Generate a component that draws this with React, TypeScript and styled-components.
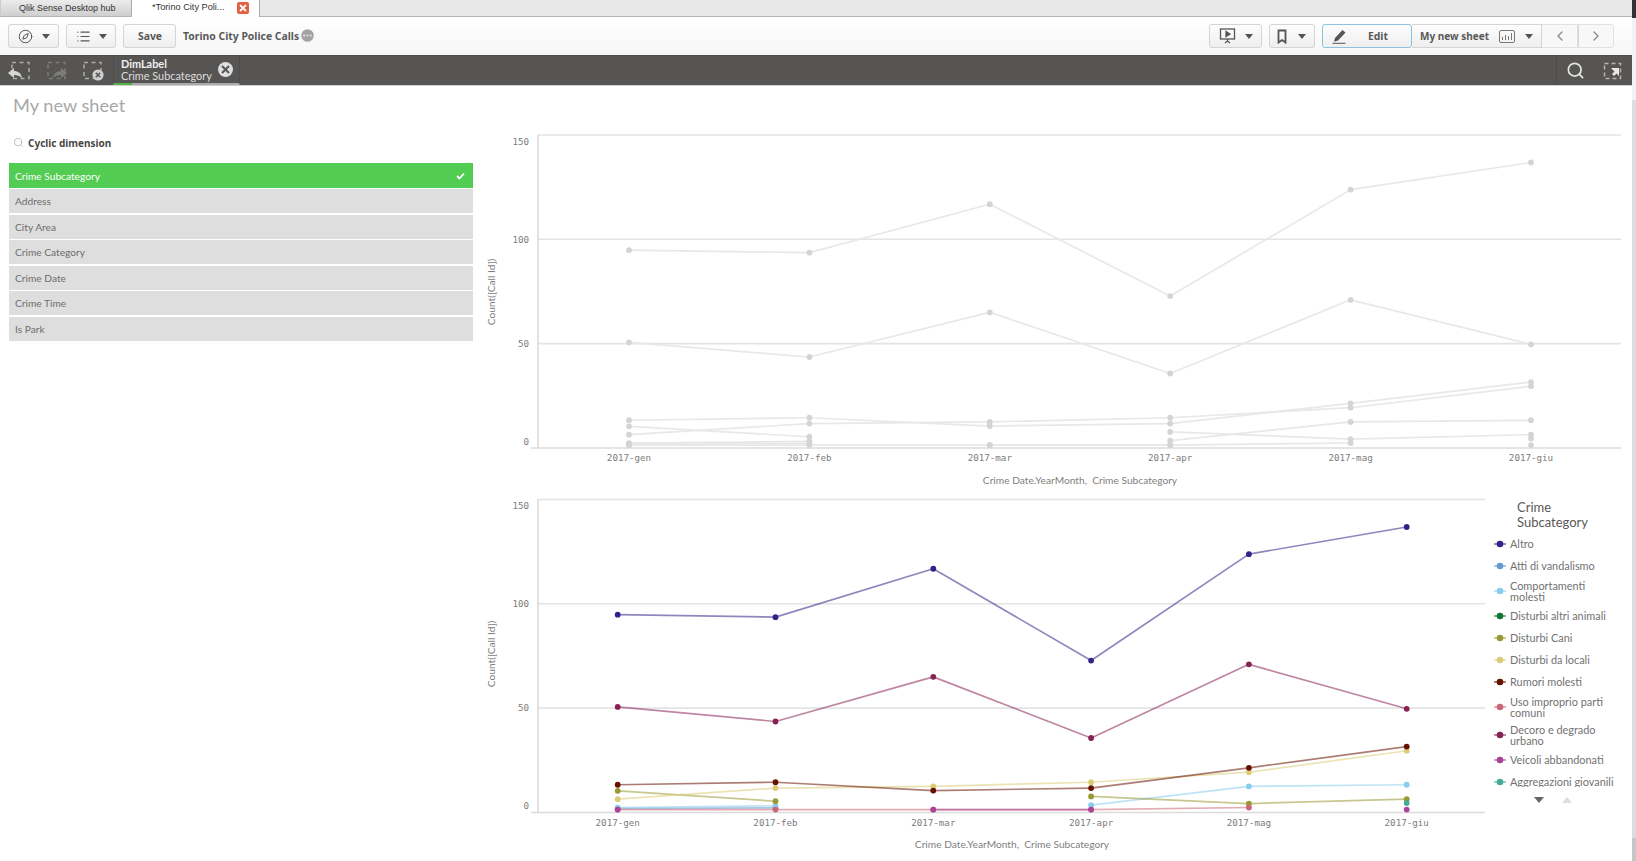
import React from "react";
import styled, { createGlobalStyle } from "styled-components";
import { Compass, List, ChevronLeft, ChevronRight, Search } from "lucide-react";

const Global = createGlobalStyle`
  html, body { margin: 0; padding: 0; height: 100%; overflow: hidden; background: #fff; }
  * { box-sizing: border-box; }
  body { font-family: "Lato", "Open Sans", sans-serif; }
`;

const Screen = styled.div`
  display: flex;
  width: 1636px;
  height: 861px;
  overflow: hidden;
`;
const Main = styled.div`
  width: 1632px;
  display: flex;
  flex-direction: column;
`;
const ScrollBar = styled.div`
  width: 4px;
  display: flex;
  flex-direction: column;
`;
const ScrollPart = styled.div<{ $h?: number; $c: string }>`
  height: ${(p) => (p.$h ? `${p.$h}px` : "auto")};
  flex: ${(p) => (p.$h ? "none" : 1)};
  background: ${(p) => p.$c};
`;

const TabStrip = styled.div`
  height: 17px;
  display: flex;
  background: #e8e8e8;
  border-bottom: 1px solid #b5b5b5;
  font-family: "Liberation Sans", sans-serif;
  font-size: 9px;
  color: #333;
`;
const HubTab = styled.div`
  width: 132px;
  padding: 3px 0 0 18px;
  background: linear-gradient(#ececec, #cfcfcf);
  border-right: 1px solid #aaa;
  border-left: 1px solid #ccc;
`;
const ActiveTab = styled.div`
  width: 128px;
  height: 17px;
  padding: 2px 0 0 20px;
  background: #fff;
  border-right: 1px solid #aaa;
  display: flex;
  gap: 12px;
`;
const ActiveLabel = styled.span`
  font-size: 9.2px;
`;
const TabClose = styled.span`
  width: 12px;
  height: 12px;
  border-radius: 2px;
  background: #e2603f;
  display: flex;
  align-items: center;
  justify-content: center;
`;

const Toolbar = styled.div`
  height: 38px;
  display: flex;
  align-items: center;
  padding: 0 18px 0 8px;
  gap: 7px;
  background: linear-gradient(#ffffff, #f6f6f6);
  font-family: "Noto Sans", sans-serif;
  font-weight: 700;
  font-size: 10.4px;
  color: #595959;
`;
const ToolButton = styled.div<{ $w: number; $blue?: boolean }>`
  width: ${(p) => p.$w}px;
  height: 24px;
  border: 1px solid ${(p) => (p.$blue ? "#8cc4e0" : "#d4d4d4")};
  border-radius: 3px;
  background: linear-gradient(#fdfdfd, #efefef);
  display: flex;
  align-items: center;
  justify-content: space-between;
  padding: 0 ${(p) => (p.$blue ? 23 : 8)}px 0 9px;
`;
const Caret = styled.span`
  width: 0;
  height: 0;
  border-left: 4px solid transparent;
  border-right: 4px solid transparent;
  border-top: 5px solid #555;
`;
const SaveLabel = styled.span`
  margin: 0 auto;
`;
const AppTitle = styled.div`
  display: flex;
  align-items: center;
  gap: 2px;
  margin-top: -1px;
  white-space: nowrap;
`;
const Spacer = styled.div`
  flex: 1;
`;
const ButtonGroup = styled.div`
  display: flex;
`;
const SheetSelect = styled.div`
  width: 130px;
  height: 24px;
  border: 1px solid #d4d4d4;
  border-left: none;
  background: linear-gradient(#fdfdfd, #efefef);
  display: flex;
  align-items: center;
  padding: 0 8px 0 8px;
  font-size: 10px;
  white-space: nowrap;
`;
const SheetIcon = styled.span`
  margin: 0 10px;
  display: flex;
`;
const BookmarkIcon = styled.svg`
  margin-left: -2px;
`;
const NavButton = styled.div<{ $last?: boolean }>`
  width: 36px;
  height: 24px;
  border: 1px solid #e2e2e2;
  border-left: ${(p) => (p.$last ? "1px solid #d4d4d4" : "none")};
  border-radius: ${(p) => (p.$last ? "0 3px 3px 0" : "0")};
  background: #f8f8f8;
  display: flex;
  align-items: center;
  justify-content: center;
`;

const DarkBar = styled.div`
  height: 31px;
  background: #575553;
  border-top: 1px solid #4a4a48;
  border-bottom: 1px solid #d0d0d0;
  display: flex;
  align-items: stretch;
`;
const SelIcons = styled.div`
  width: 113px;
  padding-left: 8px;
  display: flex;
  align-items: center;
  gap: 12px;
`;
const SelTab = styled.div`
  position: relative;
  width: 127px;
  padding: 2px 0 0 7px;
  font-family: "Lato", sans-serif;
  font-size: 10.9px;
  line-height: 12px;
  color: #dcdcdc;
  border-left: 1px solid #4c4c4a;
  border-right: 1px solid #4c4c4a;
  border-bottom: 2px solid #aaa;
`;
const SelName = styled.div`
  font-weight: 700;
  color: #f0f0f0;
`;
const SelGreen = styled.span`
  position: absolute;
  left: 0;
  bottom: -2px;
  width: 18px;
  height: 2px;
  background: #52b24a;
`;
const SelClose = styled.span`
  position: absolute;
  right: 6px;
  top: 6px;
  width: 15px;
  height: 15px;
  border-radius: 50%;
  background: #dedede;
  display: flex;
  align-items: center;
  justify-content: center;
`;
const DarkRight = styled.div`
  margin-left: auto;
  width: 76px;
  border-left: 1px solid #4c4c4a;
  display: flex;
  align-items: center;
  padding-left: 9px;
  gap: 18px;
`;

const Sheet = styled.div`
  flex: 1;
  display: flex;
  flex-direction: column;
  min-height: 0;
`;
const SheetTitle = styled.div`
  height: 38px;
  padding: 7px 0 0 13px;
  font-size: 18.2px;
  line-height: 24px;
  color: #a8a8a8;
`;
const SheetBody = styled.div`
  flex: 1;
  display: flex;
  min-height: 0;
`;
const LeftPanel = styled.div`
  width: 480px;
  padding: 0 7.5px 0 9px;
`;
const PanelTitle = styled.div`
  height: 39px;
  display: flex;
  align-items: center;
  gap: 4px;
  padding: 0 0 2px 4px;
  font-family: "Noto Sans", sans-serif;
  font-weight: 700;
  font-size: 10px;
  color: #484848;
`;
const Row = styled.div<{ $active?: boolean }>`
  height: ${(p) => (p.$active ? 25 : 24)}px;
  margin-bottom: ${(p) => (p.$active ? 1 : 1.5)}px;
  padding: 0 8px 0 6px;
  display: flex;
  align-items: center;
  justify-content: space-between;
  font-size: 10.2px;
  background: ${(p) => (p.$active ? "#52cc52" : "#dedede")};
  color: ${(p) => (p.$active ? "#fff" : "#6e6e6e")};
`;

const Charts = styled.div`
  flex: 1;
  display: flex;
  flex-direction: column;
`;
const ChartSvg = styled.svg`
  display: block;
  text {
    font-family: "DejaVu Sans Mono", monospace;
    font-size: 9.2px;
    fill: #7c7c7c;
  }
  .t {
    font-family: "Lato", sans-serif;
    font-size: 10.2px;
    fill: #808080;
  }
`;
const BottomRow = styled.div`
  display: flex;
`;
const Legend = styled.div`
  width: 147px;
  padding: 10px 0 0 9px;
  font-size: 10.9px;
  color: #727272;
`;
const LegendTitle = styled.div`
  padding-left: 23px;
  height: 33px;
  font-size: 13px;
  line-height: 15px;
  color: #595959;
`;
const LegendList = styled.div`
  height: 254px;
  overflow: hidden;
`;
const LegendItem = styled.div<{ $two?: boolean }>`
  height: ${(p) => (p.$two ? 28 : 22)}px;
  display: flex;
  align-items: center;
  gap: 4px;
  line-height: 11.3px;
`;
const LegendText = styled.span`
  max-width: 109px;
`;
const LegendMark = styled.svg`
  flex: none;
`;
const LegendNav = styled.div`
  display: flex;
  gap: 18px;
  padding: 10px 0 0 40px;
`;
const Arrow = styled.span<{ $up?: boolean }>`
  width: 0;
  height: 0;
  border-left: 5px solid transparent;
  border-right: 5px solid transparent;
  ${(p) => (p.$up ? "border-bottom: 6px solid #ddd;" : "border-top: 6px solid #666;")}
`;

type S = { name: string; c: string; v: (number | null)[]; two?: boolean };
const series: S[] = [
  { name: "Altro", c: "#332288", v: [94.8, 93.6, 116.8, 72.8, 123.8, 136.8] },
  { name: "Atti di vandalismo", c: "#6699cc", v: [1.9, 2.2, null, null, null, null] },
  { name: "Comportamenti molesti", c: "#88ccee", v: [2.3, 3.2, null, 3.5, 12.5, 13.3], two: true },
  { name: "Disturbi altri animali", c: "#117733", v: [null, null, null, null, null, null] },
  { name: "Disturbi Cani", c: "#999933", v: [10.4, 5.4, null, 7.7, 4.3, 6.4] },
  { name: "Disturbi da locali", c: "#ddcc77", v: [6.4, 11.7, 12.5, 14.5, 19.3, 29.6] },
  { name: "Rumori molesti", c: "#661100", v: [13.3, 14.5, 10.5, 11.7, 21.4, 31.6] },
  { name: "Uso improprio parti comuni", c: "#cc6677", v: [1.4, 1.4, 1.4, 1.4, 2.4, null], two: true },
  { name: "Decoro e degrado urbano", c: "#882255", v: [50.6, 43.6, 65, 35.7, 71, 49.7], two: true },
  { name: "Veicoli abbandonati", c: "#aa4499", v: [1.4, null, 1.4, 1.4, null, 1.4] },
  { name: "Aggregazioni giovanili", c: "#44aa99", v: [null, null, null, null, null, 4.5] },
];
const months = ["2017-gen", "2017-feb", "2017-mar", "2017-apr", "2017-mag", "2017-giu"];

type ChartProps = {
  x0: number;
  dx: number;
  zero: number;
  right: number;
  top: number;
  w: number;
  h: number;
  muted?: boolean;
  labelY: number;
  titleX: number;
  titleY: number;
  yTitle: number;
  shift: number;
};

function Chart({ x0, dx, zero, right, top, w, h, muted, labelY, titleX, titleY, yTitle, shift }: ChartProps) {
  const k = 2.087;
  const X = (i: number) => x0 + i * dx;
  const Y = (v: number) => zero - v * k;
  const grid = [150, 100, 50];
  const labelOffset: Record<number, number> = { 150: 10.5, 100: 4, 50: 4, 0: -2.5 };
  return (
    <ChartSvg width={w} height={h} viewBox={`480 ${top} ${w} ${h}`}>
      {grid.map((g) => (
        <line key={g} x1={538} x2={right} y1={Y(g)} y2={Y(g)} stroke="#e4e4e4" strokeWidth={1.6} />
      ))}
      <line x1={538} x2={538} y1={Y(150)} y2={zero} stroke="#cfcfcf" strokeWidth={1.2} />
      <line x1={531} x2={right} y1={zero} y2={zero} stroke="#dcdcdc" strokeWidth={1.6} />
      {[150, 100, 50, 0].map((g) => (
        <text key={g} x={529} y={Y(g) + labelOffset[g] + shift} textAnchor="end">
          {g}
        </text>
      ))}
      <text className="t" transform={`translate(495 ${yTitle}) rotate(-90)`} textAnchor="middle">
        Count([Call Id])
      </text>
      {months.map((m, i) => (
        <text key={m} x={X(i)} y={labelY} textAnchor="middle">
          {m}
        </text>
      ))}
      <text className="t" x={titleX} y={titleY} textAnchor="middle">
        {"Crime Date.YearMonth,\u00a0 Crime Subcategory"}
      </text>
      {series.map((s) => {
        const segs: React.ReactNode[] = [];
        s.v.forEach((v, i) => {
          const n = s.v[i + 1];
          if (v != null && n != null) {
            segs.push(
              <line
                key={`l${i}`}
                x1={X(i)}
                y1={Y(v)}
                x2={X(i + 1)}
                y2={Y(n)}
                stroke={muted ? "#e8e8e8" : s.c}
                strokeOpacity={muted ? 1 : 0.55}
                strokeWidth={1.7}
              />
            );
          }
        });
        return <g key={s.name}>{segs}</g>;
      })}
      {series.map((s) => (
        <g key={s.name}>
          {s.v.map((v, i) =>
            v == null ? null : (
              <circle key={i} cx={X(i)} cy={Y(v)} r={2.9} fill={muted ? "#d4d4d4" : s.c} />
            )
          )}
        </g>
      ))}
    </ChartSvg>
  );
}

const SelBox = ({ c, children }: { c: string; children?: React.ReactNode }) => (
  <svg width="24" height="22" viewBox="0 0 24 22" fill="none">
    <rect x="4" y="2.5" width="17" height="16" stroke={c} strokeWidth="1.5" strokeDasharray="4 3.5" />
    {children}
  </svg>
);

export default function App() {
  return (
    <Screen>
      <Global />
      <Main>
        <TabStrip>
          <HubTab>Qlik Sense Desktop hub</HubTab>
          <ActiveTab>
            <ActiveLabel>*Torino City Poli...</ActiveLabel>
            <TabClose>
              <svg width="8" height="8" viewBox="0 0 8 8">
                <path d="M1 1l6 6M7 1L1 7" stroke="#fff" strokeWidth="1.8" />
              </svg>
            </TabClose>
          </ActiveTab>
        </TabStrip>
        <Toolbar>
          <ToolButton $w={51}>
            <Compass size={15} color="#555" strokeWidth={1.6} />
            <Caret />
          </ToolButton>
          <ToolButton $w={50}>
            <List size={15} color="#555" strokeWidth={1.8} />
            <Caret />
          </ToolButton>
          <ToolButton $w={53}>
            <SaveLabel>Save</SaveLabel>
          </ToolButton>
          <AppTitle>
            Torino City Police Calls
            <svg width="13" height="13" viewBox="0 0 12 12">
              <circle cx="6" cy="6" r="5.8" fill="#a3a3a3" />
              <circle cx="3" cy="6" r="0.9" fill="#eee" />
              <circle cx="6" cy="6" r="0.9" fill="#eee" />
              <circle cx="9" cy="6" r="0.9" fill="#eee" />
            </svg>
          </AppTitle>
          <Spacer />
          <ToolButton $w={53}>
            <svg width="18" height="16" viewBox="0 0 18 16" fill="none" stroke="#555" strokeWidth="1.3">
              <rect x="1.5" y="1" width="14" height="10" />
              <path d="M7 3.5l4 2.5-4 2.5z" fill="#555" />
              <path d="M8.5 11v2M6 15l2.5-2 2.5 2" />
            </svg>
            <Caret />
          </ToolButton>
          <ToolButton $w={46}>
            <BookmarkIcon width="10" height="15" viewBox="0 0 10 15" fill="none" stroke="#555" strokeWidth="1.8">
              <path d="M1.500 1.500h7v12l-3.500-2.500-3.500 2.500z" />
            </BookmarkIcon>
            <Caret />
          </ToolButton>
          <ButtonGroup>
            <ToolButton $w={90} $blue>
              <svg width="16" height="16" viewBox="0 0 16 16" fill="#555">
                <path d="M3 10l7.500-8 3 2.600-7.500 8-4 1.200z" />
                <path d="M0.500 15.300h13" stroke="#555" strokeWidth="1" />
              </svg>
              Edit
            </ToolButton>
            <SheetSelect>
              My new sheet
              <SheetIcon>
                <svg width="16" height="13" viewBox="0 0 16 13" fill="none" stroke="#777" strokeWidth="1">
                  <rect x="0.5" y="0.5" width="15" height="12" rx="1.5" />
                  <path d="M3.5 10V7M6.5 10V5M9.5 10V6M12.5 10V3" />
                </svg>
              </SheetIcon>
              <Caret />
            </SheetSelect>
            <NavButton>
              <ChevronLeft size={16} color="#8a8a8a" />
            </NavButton>
            <NavButton $last>
              <ChevronRight size={16} color="#8a8a8a" />
            </NavButton>
          </ButtonGroup>
        </Toolbar>
        <DarkBar>
          <SelIcons>
            <SelBox c="#aaaaa8">
              <path d="M0 13l6-5v3c4 0 7 2 8 7-2-2-5-3-8-3v3z" fill="#d6d6d6" />
            </SelBox>
            <SelBox c="#7b7b79">
              <path d="M23 13l-6-5v3c-4 0-7 2-8 7 2-2 5-3 8-3v3z" fill="#7b7b79" />
            </SelBox>
            <SelBox c="#aaaaa8">
              <circle cx="18" cy="15" r="5.600" fill="#cfcfcf" />
              <path d="M15.800 12.800l4.400 4.400M20.200 12.800l-4.400 4.400" stroke="#575553" strokeWidth="1.500" />
            </SelBox>
          </SelIcons>
          <SelTab>
            <SelName>DimLabel</SelName>
            Crime Subcategory
            <SelGreen />
            <SelClose>
              <svg width="9" height="9" viewBox="0 0 9 9">
                <path d="M1 1l7 7M8 1L1 8" stroke="#575553" strokeWidth="2" />
              </svg>
            </SelClose>
          </SelTab>
          <DarkRight>
            <Search size={19} color="#e2e2e2" strokeWidth={2.2} />
            <svg width="20" height="20" viewBox="0 0 20 20" fill="none">
              <rect x="1.500" y="2.500" width="16" height="15" stroke="#b5b5b5" strokeWidth="1.500" strokeDasharray="4 3" />
              <path d="M8 7h8v8l-2.500-2.500-2.500 2.500-2-2 2.500-2.500z" fill="#e8e8e8" />
            </svg>
          </DarkRight>
        </DarkBar>
        <Sheet>
          <SheetTitle>My new sheet</SheetTitle>
          <SheetBody>
            <LeftPanel>
              <PanelTitle>
                <Search size={11} color="#aaa" strokeWidth={1.6} />
                Cyclic dimension
              </PanelTitle>
              <Row $active>
                Crime Subcategory
                <svg width="9" height="8" viewBox="0 0 9 8">
                  <path d="M1 4l2.500 2.500L8 1.500" fill="none" stroke="#fff" strokeWidth="1.800" />
                </svg>
              </Row>
              <Row>Address</Row>
              <Row>City Area</Row>
              <Row>Crime Category</Row>
              <Row>Crime Date</Row>
              <Row>Crime Time</Row>
              <Row>Is Park</Row>
            </LeftPanel>
            <Charts>
              <Chart
                x0={629}
                dx={180.4}
                zero={448}
                right={1621}
                top={124}
                w={1152}
                h={366}
                muted
                labelY={461}
                titleX={1080}
                titleY={483.5}
                yTitle={292}
                shift={-0.6}
              />
              <BottomRow>
                <Chart
                  x0={617.7}
                  dx={157.8}
                  zero={812.5}
                  right={1485}
                  top={490}
                  w={1005}
                  h={371}
                  labelY={825.5}
                  titleX={1012}
                  titleY={848}
                  yTitle={654}
                  shift={-1}
                />
                <Legend>
                  <LegendTitle>
                    Crime
                    <br />
                    Subcategory
                  </LegendTitle>
                  <LegendList>
                    {series.map((s) => (
                      <LegendItem key={s.name} $two={s.two}>
                        <LegendMark width="12" height="8" viewBox="0 0 12 8">
                          <line x1="0" x2="12" y1="4" y2="4" stroke={s.c} strokeOpacity="0.7" strokeWidth="1.500" />
                          <circle cx="6" cy="4" r="3.300" fill={s.c} />
                        </LegendMark>
                        <LegendText>{s.name}</LegendText>
                      </LegendItem>
                    ))}
                  </LegendList>
                  <LegendNav>
                    <Arrow />
                    <Arrow $up />
                  </LegendNav>
                </Legend>
              </BottomRow>
            </Charts>
          </SheetBody>
        </Sheet>
      </Main>
      <ScrollBar>
        <ScrollPart $h={18} $c="#333" />
        <ScrollPart $h={82} $c="#f3f3f3" />
        <ScrollPart $c="#dddddd" />
        <ScrollPart $h={23} $c="#c6c6c6" />
      </ScrollBar>
    </Screen>
  );
}
